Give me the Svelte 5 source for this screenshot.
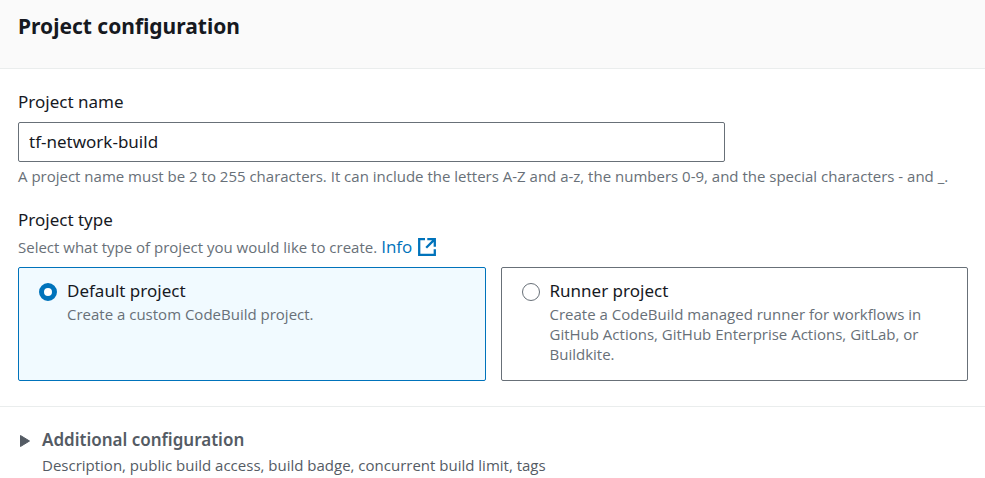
<script>
  let projectName = $state('tf-network-build');
  let projectType = $state('default');
  let expanded = $state(false);

  const types = [
    {
      value: 'default',
      title: 'Default project',
      description: 'Create a custom CodeBuild project.',
    },
    {
      value: 'runner',
      title: 'Runner project',
      description:
        'Create a CodeBuild managed runner for workflows in GitHub Actions, GitHub Enterprise Actions, GitLab, or Buildkite.',
    },
  ];
</script>

<section class="panel">
  <header class="panel-header">
    <h2>Project configuration</h2>
  </header>

  <form class="fields">
    <div class="field">
      <label class="label" for="project-name">Project name</label>
      <input
        id="project-name"
        class="text-input"
        type="text"
        bind:value={projectName}
        aria-describedby="project-name-hint"
        spellcheck="false"
      />
      <p id="project-name-hint" class="hint">
        A project name must be 2 to 255 characters. It can include the letters A-Z and a-z, the numbers 0-9, and the special characters - and _.
      </p>
    </div>

    <fieldset class="field">
      <legend class="label">Project type</legend>
      <p class="description">
        <span>Select what type of project you would like to create.</span>
        <a class="info" href="#info">
          Info
          <svg viewBox="0 0 18 18" width="18" height="18" fill="none" stroke="currentColor" stroke-width="2.3" aria-hidden="true">
            <path d="M7 1.2H1.2v15.6h15.6V11.3" />
            <path d="M9.3 1.2h7.5v7.5M16.6 1.4L8.2 9.8" />
          </svg>
        </a>
      </p>
      <div class="tiles">
        {#each types as type}
          <label class="tile" class:selected={projectType === type.value}>
            <input type="radio" name="project-type" value={type.value} bind:group={projectType} />
            <span class="tile-text">
              <span class="tile-title">{type.title}</span>
              <span class="tile-description">{type.description}</span>
            </span>
          </label>
        {/each}
      </div>
    </fieldset>
  </form>

  <footer class="additional">
    <button type="button" class="expander" aria-expanded={expanded} onclick={() => (expanded = !expanded)}>
      <svg class="caret" class:open={expanded} viewBox="0 0 12 14" width="12" height="14" aria-hidden="true">
        <path d="M2.5 2.5v11L11.5 8z" fill="currentColor" stroke="currentColor" stroke-linejoin="round" />
      </svg>
      <span>Additional configuration</span>
    </button>
    <p>Description, public build access, build badge, concurrent build limit, tags</p>
  </footer>
</section>

<style>
  :global(body) {
    background: #fff;
  }

  .panel {
    font-family: 'Noto Sans', 'Open Sans', sans-serif;
    font-size: 17px;
    line-height: 24px;
    color: #16191f;
  }

  h2,
  p {
    margin: 0;
  }

  .panel-header {
    padding: 12px 18px 28px;
    background: #fafafa;
    border-bottom: 1px solid #eaeded;
  }

  h2 {
    font-size: 21px;
    line-height: 28px;
    font-weight: 700;
  }

  .fields {
    display: flex;
    flex-direction: column;
    gap: 22px;
    padding: 21px 17px 25px 18px;
  }

  .field {
    min-width: 0;
    margin: 0;
    padding: 0;
    border: 0;
  }

  .label {
    display: block;
    padding: 0;
  }

  .text-input {
    display: block;
    box-sizing: border-box;
    width: calc(75% - 6px);
    height: 40px;
    margin: 8px 0 4px;
    padding: 0 10px 2px;
    border: 1px solid #687078;
    border-radius: 2px;
    background: #fff;
    color: inherit;
    font: inherit;
  }

  .hint,
  .description,
  .tile-description {
    font-family: 'Open Sans', 'Noto Sans', sans-serif;
    font-size: 15px;
    line-height: 20px;
    color: #687078;
  }

  .description {
    display: flex;
    align-items: baseline;
    gap: 4px;
    margin: 5px 0 10px;
  }

  .info {
    display: inline-flex;
    align-items: center;
    gap: 6px;
    color: #0073bb;
    font-size: 17px;
    line-height: 20px;
    text-decoration: none;
  }

  .tiles {
    display: grid;
    grid-template-columns: 1fr 1fr;
    gap: 15px;
  }

  .tile {
    display: flex;
    align-items: flex-start;
    gap: 10px;
    padding: 11px 20px 16px;
    border: 1px solid #687078;
    border-radius: 2px;
    background: #fff;
    cursor: pointer;
  }

  .tile.selected {
    border-color: #0073bb;
    background: #f1faff;
  }

  .tile input {
    appearance: none;
    box-sizing: border-box;
    flex: none;
    width: 18px;
    height: 18px;
    margin: 4px 0 0;
    border: 1px solid #687078;
    border-radius: 50%;
    background: #fff;
  }

  .tile input:checked {
    border: 5px solid #0073bb;
  }

  .tile-text {
    display: flex;
    flex-direction: column;
    gap: 1px;
  }

  .additional {
    padding: 21px 18px 0;
    border-top: 1px solid #eaeded;
    color: #545b64;
  }

  .additional p {
    margin-top: 1px;
    padding-left: 24px;
    font-family: 'Open Sans', 'Noto Sans', sans-serif;
    font-size: 15px;
    line-height: 24px;
  }

  .expander {
    display: flex;
    align-items: center;
    gap: 12px;
    padding: 0;
    border: 0;
    background: none;
    color: inherit;
    font: inherit;
    font-weight: 600;
    cursor: pointer;
  }

  .caret.open {
    transform: rotate(90deg);
  }
</style>
